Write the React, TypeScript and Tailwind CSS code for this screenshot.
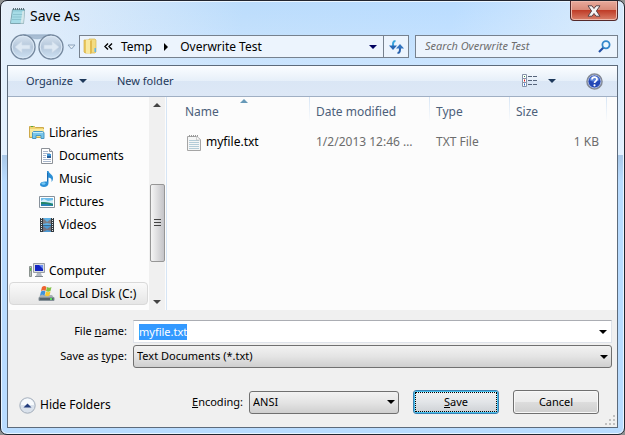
import { useEffect, useRef } from 'react';
import type { ReactNode } from 'react';

// Icons
const NotepadIcon = () => (
  <svg width="17" height="18" viewBox="0 0 17 18">
    <path d="M3.500 2.500h12l-1 14h-13z" fill="#8fc9d6" stroke="#7fa6b0" />
    <path d="M4 4.500h10.500L14 14l-3 2H2z" fill="#a6dbe6" />
    <path d="M4 7.500h10M3.500 10h10M3 12.500h10" stroke="#8cc3d0" />
    <path d="M13.500 4h2l-1 12.500h-3z" fill="#e9f0f0" opacity=".7" />
    <path d="M4.500 1v2M6.500 1v2M8.500 1v2M10.500 1v2M12.500 1v2M14.500 1v2" stroke="#5b7078" />
  </svg>
);

const FolderIcon = () => (
  <svg width="14" height="17" viewBox="0 0 14 17">
    <path d="M1 2h5v13H2l-1-1z" fill="#e8c85f" stroke="#d5b04a" strokeWidth=".7" />
    <path d="M6 1h6l1 1v12l-1 1H6z" fill="#f3dc82" stroke="#d9b855" strokeWidth=".7" />
    <path d="M3 2h4v13l-1 1-3-1z" fill="#f9e9a0" />
    <path d="M7 3l2-1v13l-2 1z" fill="#e2bb50" />
    <path d="M11.500 10h1.500v4h-1.500z" fill="#62b4e8" />
  </svg>
);

const LibrariesIcon = () => (
  <svg width="16" height="15" viewBox="0 0 16 15">
    <path d="M.5 1.500h5l1 1h8v10H.5z" fill="#f0d571" stroke="#cda94a" />
    <path d="M1 4h14v7.500H1z" fill="#fae99c" />
    <path d="M2 1.500h2" stroke="#55a83d" />
    <path d="M3.500 13.500V7.500l1-1h9l1.500 1v6h-3v-3h-5v3z" fill="#79c6ea" stroke="#4897c4" />
    <path d="M4 7.500h10" stroke="#c5edfa" />
  </svg>
);

const DocumentIcon = () => (
  <svg width="16" height="16" viewBox="0 0 16 16">
    <path d="M2.500.5h8l3 3v12h-11z" fill="#fff" stroke="#8c9198" />
    <path d="M10.500.5v3h3" fill="#e4e7eb" stroke="#8c9198" />
    <path d="M4 3.500h5M4 5.500h7M4 7.500h3M4 9.500h3M4 11.500h8M4 13.500h8" stroke="#a7b6cc" />
    <path d="M8 6h4v4H8z" fill="#4095d5" />
    <path d="M8 8h4v2H8z" fill="#245c9b" />
  </svg>
);

const MusicIcon = () => (
  <svg width="16" height="16" viewBox="0 0 16 16">
    <path d="M8 0h1.500c.5 3 4.500 3.500 4.500 7 .1 2-.7 3-1.500 4 .5-3-.5-4-3-4.500V12c0 2.500-2 4-4.500 4S1 15 1 13.300C1 11.300 4 10 8 10.500z" fill="#2b8fd6" />
    <path d="M8.500 2v8.500" stroke="#1c6bb2" />
    <ellipse cx="4.500" cy="12.500" rx="2" ry="1.300" fill="#78c9f4" />
  </svg>
);

const PicturesIcon = () => (
  <svg width="16" height="14" viewBox="0 0 16 14">
    <path d="M.5 1.500h15v11H.5z" fill="#fff" stroke="#87919b" />
    <path d="M2 3h12v8H2z" fill="#6fbdeb" />
    <path d="M2 6l3-2 4 2 5-1v3H2z" fill="#d6eff8" />
    <path d="M2 7c4 0 7 0 12 2v2H2z" fill="#23856a" />
    <path d="M2 9.500c4-1 8 0 12 1v.5H2z" fill="#2a82b8" />
  </svg>
);

const VideosIcon = () => (
  <svg width="16" height="16" viewBox="0 0 16 16">
    <path d="M1 1h14v14H1z" fill="#343b40" />
    <path d="M4 1h8v7H4z" fill="#5fb2e6" />
    <path d="M4 8.500h8V15H4z" fill="#4a9ad6" />
    <path d="M4 1l4 4 4-3v5L8 6 4 7zM4 9l4 3 4-3v5l-4-1-4 2z" fill="#965b45" opacity=".6" />
    <path d="M2.500 1v14M13.500 1v14" stroke="#e2e7e9" strokeDasharray="1 1" />
  </svg>
);

const ComputerIcon = () => (
  <svg width="16" height="15" viewBox="0 0 16 15">
    <path d="M.5 3.500h2v10h-2z" fill="#b7bdba" stroke="#8b938f" />
    <path d="M1 5h1v3H1z" fill="#52bd42" />
    <path d="M4.500.5h11v9h-11z" fill="#d9dde1" stroke="#979da5" />
    <path d="M6 2h8v6H6z" fill="#1426c2" />
    <path d="M10 2h4v4z" fill="#6b8cf0" />
    <path d="M8 10h4l1 3H7z" fill="#b3bac1" />
    <path d="M6 13.500h8" stroke="#7f8790" />
  </svg>
);

const DiskIcon = () => (
  <svg width="17" height="17" viewBox="0 0 17 17">
    <path d="M2 10h12l2 3v3H1v-3z" fill="#a8afb4" />
    <path d="M1 12.500h15v3H1z" fill="#56636c" stroke="#87929a" />
    <path d="M12 14h2" stroke="#57e05a" strokeWidth="2" />
    <path d="M4 2c2-1.500 3-1 4.500 0L7.500 6C6 5 5 5 3 6z" fill="#ee6430" />
    <path d="M9 2c2 1 3 1 4.500 0l-1 4c-1.500 1-3 1-4.500 0z" fill="#83c244" />
    <path d="M3 6.500c1.500-1 3-1 4.500 0l-1 4c-1.500-1-3-1-4.500 0z" fill="#3f92db" />
    <path d="M8 6.500c1.500 1 3 1 4.500 0l-1 4c-1.500 1-3 1-4.500 0z" fill="#f8c830" />
  </svg>
);

const TextFileIcon = () => (
  <svg width="14" height="17" viewBox="0 0 14 17">
    <path d="M.5 2.500h9l4 3v11H.5z" fill="#f5f6f6" stroke="#a5a5a5" />
    <path d="M2 6.500h10M2 8.500h10M2 10.500h10M2 12.500h10M2 14.500h10" stroke="#b4ccd8" />
    <path d="M2.500 1v2M4.500 1v2M6.500 1v2M8.500 1v2M10.500 1v2" stroke="#999" />
    <path d="M9.500 2l4 4h-4z" fill="#fdfdfd" stroke="#b5b5b5" strokeWidth=".6" />
  </svg>
);

const RefreshIcon = () => (
  <svg width="15" height="14" viewBox="0 0 15 14">
    <path d="M6.500 1C4 1 4 3 4 6" fill="none" stroke="#38a5dd" strokeWidth="2" />
    <path d="M0 5.500h8L4 10z" fill="#2868b6" />
    <path d="M8.500 13c2.500 0 2.500-2 2.500-5" fill="none" stroke="#2861ad" strokeWidth="2" />
    <path d="M7 8.500h8L11 4z" fill="#3374bf" />
  </svg>
);

const SearchIcon = () => (
  <svg width="13" height="13" viewBox="0 0 13 13" className="shrink-0">
    <path d="M1 12l4.500-4.500" stroke="#2450a4" strokeWidth="2.200" />
    <circle cx="8" cy="4.800" r="3.600" fill="#eef8ff" stroke="#3488cb" strokeWidth="1.800" />
  </svg>
);

const ViewIcon = () => (
  <svg width="16" height="14" viewBox="0 0 16 14" fill="none">
    <path d="M.5.5h4v4h-4zM.5 4.500h4v4h-4zM.5 8.500h4v4h-4z" fill="#fff" stroke="#8592a7" />
    <path d="M2 2.500h1" stroke="#399040" />
    <path d="M2 6.500h1" stroke="#e32020" strokeWidth="2" />
    <path d="M2 10.500h1" stroke="#2766ce" strokeWidth="2" />
    <path d="M6 2.500h4M11 2.500h4M6 6.500h4M11 6.500h4M6 10.500h4M11 10.500h4" stroke="#56647a" />
  </svg>
);

const HelpIcon = () => (
  <svg width="17" height="17" viewBox="0 0 17 17">
    <circle cx="8.500" cy="8.500" r="7.500" fill="#2347b5" stroke="#858b95" strokeWidth="1.600" />
    <circle cx="8.500" cy="8.500" r="6.400" fill="none" stroke="#c4cee4" strokeWidth=".8" />
    <path d="M3.500 7a5.200 5.200 0 0110 0c-3 2-7 2-10 0z" fill="#5f86dc" />
    <path d="M6 6.600c0-3.200 5-3.200 5-.3 0 1.800-2.500 1.800-2.500 3.700" fill="none" stroke="#fff" strokeWidth="1.700" />
    <circle cx="8.500" cy="12.300" r="1.100" fill="#fff" />
  </svg>
);

const NavIcon = () => (
  <svg width="54" height="26" viewBox="0 0 54 26">
    <defs>
      <linearGradient id="nav" x2="0" y2="1">
        <stop stopColor="#d8e4f1" />
        <stop offset=".5" stopColor="#b4c6da" />
        <stop offset="1" stopColor="#cfe3f5" />
      </linearGradient>
    </defs>
    <path d="M13 .8h28c-7 1-8 4-14 4s-7-3-14-4z" fill="#a8bdd3" stroke="#8ca6c1" strokeWidth=".6" />
    <circle cx="13" cy="13" r="12" fill="url(#nav)" stroke="#76899f" strokeWidth="1.400" />
    <circle cx="41" cy="13" r="12" fill="url(#nav)" stroke="#76899f" strokeWidth="1.400" />
    <circle cx="13" cy="13" r="10.800" fill="none" stroke="#dce9f6" />
    <circle cx="41" cy="13" r="10.800" fill="none" stroke="#dce9f6" />
    <path d="M5 13l7-6v4h8v4h-8v4zM49 13l-7-6v4h-8v4h8v4z" fill="#dde8f3" stroke="#c9d7e6" strokeWidth=".7" />
  </svg>
);

const Caret = ({ className = 'text-black' }: { className?: string }) => (
  <svg width="8" height="4" viewBox="0 0 8 4" className={className}>
    <path d="M0 0h8L4 4z" fill="currentColor" />
  </svg>
);

const places = [
  { label: 'Documents', icon: DocumentIcon },
  { label: 'Music', icon: MusicIcon },
  { label: 'Pictures', icon: PicturesIcon },
  { label: 'Videos', icon: VideosIcon },
];

const columns = ['Name', 'Date modified', 'Type', 'Size'];

function TreeItem({ icon, label, nested, selected }: { icon: ReactNode; label: string; nested?: boolean; selected?: boolean }) {
  return (
    <li
      className={`mx-px flex h-[23px] items-center gap-1 rounded-sm border ${nested ? 'pl-7' : 'pl-[18px]'} ${
        selected ? 'border-[#d9d9d9] bg-linear-to-b from-[#fafafa] to-[#e6e6e6]' : 'border-transparent'
      }`}
    >
      <span className="flex w-[17px] shrink-0 justify-center">{icon}</span>
      <a href="#" className="whitespace-nowrap">{label}</a>
    </li>
  );
}

function Dropdown({ id, value, className = '' }: { id: string; value: string; className?: string }) {
  return (
    <div className={`relative ${className}`}>
      <select
        id={id}
        defaultValue={value}
        className="h-[23px] w-full appearance-none rounded-[3px] border border-[#707070] bg-linear-to-b from-[#f2f2f2] via-[#e4e4e4] to-[#cfcfcf] pl-[3px] text-[11px] text-black outline-none"
      >
        <option>{value}</option>
      </select>
      <span className="pointer-events-none absolute inset-y-0 right-1 flex items-center">
        <Caret />
      </span>
    </div>
  );
}

export default function SaveAsDialog() {
  const fileName = useRef<HTMLInputElement>(null);

  useEffect(() => {
    fileName.current?.focus();
    fileName.current?.select();
  }, []);

  return (
    <div className="h-screen bg-[#8f9191] font-['Noto_Sans','Open_Sans',sans-serif] text-[12px] text-black">
      <div className="flex h-full flex-col rounded-[7px] border border-[#22252f] bg-[linear-gradient(180deg,#e3f1ff00_0,#e3f1ff_154px,#a9c8e8_154px,#b9dcff_180px,#b9dcff_100%),linear-gradient(100deg,#e6eff9_0,#bbdcfc_35%,#b9dcff_65%,#d8eafc_88%,#c4e0fb_100%)] px-[6px] pb-[6px] shadow-[inset_0_0_0_1px_#eaf5ff]">
        {/* Title bar */}
        <header className="flex h-[33px] shrink-0 items-start justify-between pl-0.5">
          <div className="flex items-center gap-1 pt-[5px]">
            <NotepadIcon />
            <h1 className="text-[14px] leading-5">Save As</h1>
          </div>
          <button aria-label="Close" className="flex h-5 w-12 items-center justify-center rounded-b-[4px] border border-t-0 border-[#54292b] bg-[linear-gradient(#e8aa9c,#d98a78_48%,#bf3d28_50%,#d9806a)] shadow-[inset_0_0_0_1px_#edb9ac]">
            <svg width="14" height="12" viewBox="0 0 14 12">
              <path d="M1 .8h4l2 2.700L9 .8h4L9.400 6l3.600 5.200H9L7 8.500l-2 2.700H1L4.600 6z" fill="#f4f4f4" stroke="#5b4549" />
            </svg>
          </button>
        </header>

        {/* Address bar */}
        <div className="flex h-[31px] shrink-0 items-start pl-[3px]">
          <button aria-label="Back and forward" className="shrink-0"><NavIcon /></button>
          <button aria-label="Recent locations" className="flex h-[26px] w-[15px] shrink-0 items-center justify-center">
            <svg width="9" height="6" viewBox="0 0 9 6">
              <path d="M1 1h7L4.500 5z" fill="#e5eff8" stroke="#8ca3bb" />
            </svg>
          </button>
          <nav aria-label="Address" className="mt-px flex h-[23px] min-w-0 flex-1 items-center border border-[#76818e] bg-[#ecf4fd]">
            <span className="ml-[3px]"><FolderIcon /></span>
            <svg width="9" height="7" viewBox="0 0 9 7" className="ml-[7px]">
              <path d="M4 .5l-3 3 3 3M8 .5l-3 3 3 3" fill="none" stroke="#000" strokeWidth="1.400" />
            </svg>
            <button className="ml-2">Temp</button>
            <svg width="4" height="8" viewBox="0 0 4 8" className="ml-3"><path d="M0 0l4 4-4 4z" /></svg>
            <button className="ml-3 whitespace-nowrap">Overwrite Test</button>
            <button aria-label="Previous locations" className="mr-1.5 ml-auto"><Caret className="text-[#000060]" /></button>
            <button aria-label="Refresh" className="flex h-full w-[25px] items-center justify-center border-l border-[#76818e]"><RefreshIcon /></button>
          </nav>
          <label className="mt-px ml-1.5 flex h-[23px] w-[203px] items-center border border-[#76818e] bg-[#ecf4fd] pr-1.5 pl-[9px]">
            <input placeholder="Search Overwrite Test" aria-label="Search Overwrite Test" className="w-full min-w-0 text-[11px] italic outline-none placeholder:text-[#6d6d6d]" />
            <SearchIcon />
          </label>
        </div>

        <div className="flex min-h-0 flex-1 flex-col border border-[#5d6b7b] bg-[#f0f0f0]">
          {/* Toolbar */}
          <div className="flex h-[31px] shrink-0 items-center border-b border-[#a0afc3] bg-[linear-gradient(#fbfdff,#e6eff9_50%,#dae6f5_50%,#dde8f6)] pr-3.5 pl-[18px] text-[11px] text-[#1e395b]">
            <button className="flex items-center gap-1.5">Organize <Caret className="text-[#1e395b]" /></button>
            <button className="ml-[30px]">New folder</button>
            <button aria-label="Change view" className="ml-auto"><ViewIcon /></button>
            <button aria-label="View options" className="ml-2.5"><Caret className="text-[#1e395b]" /></button>
            <button aria-label="Help" className="ml-[30px]"><HelpIcon /></button>
          </div>

          {/* Folder tree and file list */}
          <div className="flex min-h-0 flex-1 bg-[#fcfcfc]">
            <ul className="w-[141px] shrink-0 overflow-hidden pt-6">
              <TreeItem icon={<LibrariesIcon />} label="Libraries" />
              {places.map((place) => {
                const Icon = place.icon;
                return <TreeItem key={place.label} icon={<Icon />} label={place.label} nested />;
              })}
              <li className="h-[23px]" />
              <TreeItem icon={<ComputerIcon />} label="Computer" />
              <TreeItem icon={<DiskIcon />} label="Local Disk (C:)" nested selected />
            </ul>
            <div className="flex w-4 shrink-0 flex-col items-center bg-[#f0f0f0] py-1.5">
              <Caret className="rotate-180 text-[#444]" />
              <div className="flex-[76]" />
              <div className="flex h-[78px] w-[15px] flex-col items-center justify-center gap-0.5 rounded-xs border border-[#969696] bg-linear-to-r from-[#f5f5f5] to-[#c4c4c8]">
                <span className="h-px w-[7px] bg-[#444]" />
                <span className="h-px w-[7px] bg-[#444]" />
                <span className="h-px w-[7px] bg-[#444]" />
              </div>
              <div className="flex-[38]" />
              <Caret className="text-[#444]" />
            </div>
            <div className="relative ml-px min-w-0 flex-1 border-l border-[#d6e5f5]">
              <svg width="8" height="4" viewBox="0 0 8 4" className="absolute top-0.5 left-[73px]"><path d="M0 4l4-4 4 4z" fill="#6799b8" /></svg>
              <table className="w-full table-fixed text-left">
                <colgroup>
                  <col className="w-[143px]" />
                  <col className="w-[120px]" />
                  <col className="w-[80px]" />
                  <col className="w-[97px]" />
                  <col />
                </colgroup>
                <thead>
                  <tr className="h-[30px] text-[#4c607a]">
                    {columns.map((column) => (
                      <th
                        key={column}
                        className={`bg-[linear-gradient(#d6e5f5,#fcfcfc)] bg-[length:1px_25px] bg-right-top bg-no-repeat font-normal whitespace-nowrap ${column === 'Name' ? 'pl-[18px]' : 'pl-1.5'}`}
                      >
                        {column}
                      </th>
                    ))}
                    <th />
                  </tr>
                </thead>
                <tbody>
                  <tr className="h-[30px] text-[#6d6d6d]">
                    <td className="pl-5 text-black">
                      <span className="flex items-center gap-[5px]"><TextFileIcon /> myfile.txt</span>
                    </td>
                    <td className="truncate pr-3 pl-1.5">1/2/2013 12:46 PM</td>
                    <td className="pl-1.5">TXT File</td>
                    <td className="pr-2 text-right">1 KB</td>
                    <td />
                  </tr>
                </tbody>
              </table>
            </div>
          </div>

          {/* File name, type and actions */}
          <form className="relative shrink-0 pt-2.5 pb-[13px] text-[11px]" onSubmit={(e) => e.preventDefault()}>
            <div className="grid grid-cols-[119px_1fr] items-center gap-x-1.5 gap-y-0.5 pr-[5px]">
              <label htmlFor="name" className="text-right">File <u>n</u>ame:</label>
              <div className="flex h-[23px] items-center border border-[#dfe3ea] border-t-[#abadb3] bg-white pr-1 pl-[5px]">
                <input id="name" ref={fileName} defaultValue="myfile.txt" className="h-4 w-full min-w-0 leading-4 outline-none selection:bg-[#3399ff] selection:text-white" />
                <button type="button" aria-label="Recent names"><Caret /></button>
              </div>
              <label htmlFor="type" className="text-right">Save as <u>t</u>ype:</label>
              <Dropdown id="type" value="Text Documents (*.txt)" />
            </div>
            <div className="mt-[22px] flex items-center pr-[18px] pl-[11px]">
              <button type="button" className="mt-1.5 flex items-center gap-1 text-[12px]">
                <svg width="17" height="17" viewBox="0 0 17 17">
                  <circle cx="8.500" cy="8.500" r="7.700" fill="#dae2ec" stroke="#a3adba" />
                  <path d="M2 8a6.500 6.500 0 0113 0z" fill="#f7fafd" />
                  <path d="M4.500 10.500l4-4 4 4z" fill="#233d7d" />
                </svg>
                Hide Folders
              </button>
              <label htmlFor="encoding" className="mr-1.5 ml-auto"><u>E</u>ncoding:</label>
              <Dropdown id="encoding" value="ANSI" className="w-[150px]" />
              <button type="submit" className="ml-3.5 h-6 w-[86px] rounded-[3px] border border-[#3c7fb1] bg-linear-to-b from-[#f2f2f2] via-[#e2e5e8] to-[#cdd0d4] p-px shadow-[inset_0_0_0_1px_#48c4f0]">
                <span className="flex h-full items-center justify-center border border-dotted border-black"><span><u>S</u>ave</span></span>
              </button>
              <button type="button" className="ml-3.5 h-6 w-[86px] rounded-[3px] border border-[#707070] bg-[linear-gradient(#f2f2f2,#ebebeb_50%,#dddddd_50%,#cfcfcf)] shadow-[inset_0_0_0_1px_#f8f8f8]">Cancel</button>
            </div>
            <svg width="10" height="10" viewBox="0 0 10 10" className="absolute right-0.5 bottom-0.5">
              <path d="M8 0h2v2H8zM4 4h2v2H4zM8 4h2v2H8zM0 8h2v2H0zM4 8h2v2H4zM8 8h2v2H8z" fill="#c0c0c0" />
            </svg>
          </form>
        </div>
      </div>
    </div>
  );
}
